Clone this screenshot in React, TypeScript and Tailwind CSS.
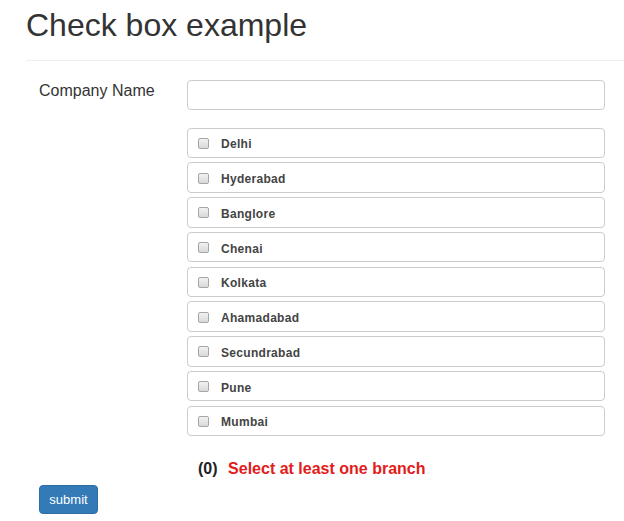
import React from "react";

const cities = [
  "Delhi",
  "Hyderabad",
  "Banglore",
  "Chenai",
  "Kolkata",
  "Ahamadabad",
  "Secundrabad",
  "Pune",
  "Mumbai",
];

export default function App() {
  return (
    <div className="min-h-[521px] w-[624px] bg-white font-['Liberation_Sans',Arial,sans-serif] text-[#333]">
      <h1 className="pl-[26px] pt-[8px] text-[32px] leading-[1.1] font-normal text-[#333]">
        Check box example
      </h1>
      <div className="ml-[26px] mt-[17px] border-t border-[#eeeeee]" />
      <div className="mt-[19px] flex">
        <label className="ml-[39px] mt-[1px] w-[148px] text-[16px] leading-[20px] text-[#333]">
          Company Name
        </label>
        <input
          type="text"
          className="h-[30px] w-[418px] rounded-[4px] border border-[#cccccc] bg-white px-3 outline-none"
        />
      </div>
      <div className="ml-[187px] mt-[17.5px] flex w-[418px] flex-col gap-[4.25px]">
        {cities.map((c) => (
          <div
            key={c}
            className="flex h-[30.5px] items-center rounded-[4px] border border-[#cccccc] bg-white pl-[10px]"
          >
            <span className="mt-[1px] box-border h-[11px] w-[11px] rounded-[2px] border border-[#a6a6a6] bg-gradient-to-b from-[#f2f2f2] to-[#d9d9d9]" />
            <span className="ml-[12px] mt-[3px] text-[12px] font-bold tracking-[0.3px] text-[#444]">
              {c}
            </span>
          </div>
        ))}
      </div>
      <div className="ml-[198px] mt-[23px] flex text-[16px] font-bold leading-[20px]">
        <span className="text-[#222]">(0)</span>
        <span className="ml-[10.5px] text-[#e31b1b]">Select at least one branch</span>
      </div>
      <div className="ml-[39px] mt-[6px]">
        <button className="flex h-[29px] w-[59px] items-center justify-center rounded-[4px] border border-[#2e6da4] bg-[#337ab7] text-[13px] text-white">
          submit
        </button>
      </div>
    </div>
  );
}
